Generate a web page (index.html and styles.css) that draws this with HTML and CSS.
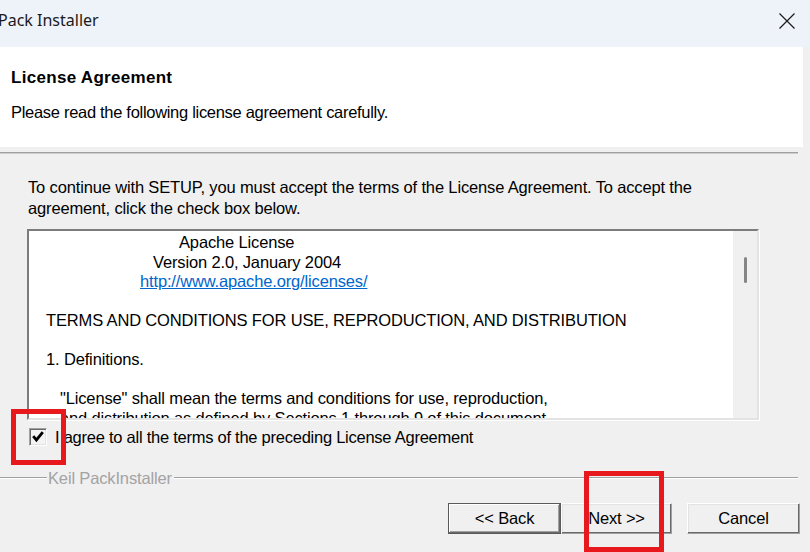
FILE: index.html
```html
<!DOCTYPE html>
<html>
<head>
<meta charset="utf-8">
<link rel="stylesheet" href="styles.css">
</head>
<body>
<div class="window">
  <div class="titlebar">
    <span class="title">Pack Installer</span>
    <svg class="close" width="16" height="16" viewBox="0 0 16 16"><path d="M0.5 0.5 L15.5 15.5 M15.5 0.5 L0.5 15.5" stroke="#1b1b1b" stroke-width="1.2" fill="none"/></svg>
  </div>
  <div class="header">
    <div class="h-title">License Agreement</div>
    <div class="h-sub">Please read the following license agreement carefully.</div>
  </div>
  <div class="sep"></div>
  <div class="content">
    <p class="intro">To continue with SETUP, you must accept the terms of the License Agreement. To accept the<br>agreement, click the check box below.</p>
    <div class="listbox">
      <div class="lic-text">
        <div class="line ind-a">Apache License</div>
        <div class="line ind-b">Version 2.0, January 2004</div>
        <div class="line ind-c"><a class="link" href="#">http://www.apache.org/licenses/</a></div>
        <div class="line">&nbsp;</div>
        <div class="line">TERMS AND CONDITIONS FOR USE, REPRODUCTION, AND DISTRIBUTION</div>
        <div class="line">&nbsp;</div>
        <div class="line">1. Definitions.</div>
        <div class="line">&nbsp;</div>
        <div class="line ind-d">"License" shall mean the terms and conditions for use, reproduction,</div>
        <div class="line ind-d">and distribution as defined by Sections 1 through 9 of this document.</div>
      </div>
      <div class="scrollbar"><div class="thumb"></div></div>
    </div>
    <div class="agree">
      <span class="cb"><svg width="14" height="14" viewBox="0 0 14 14"><path d="M2.2 6.2 L5.4 10 L11.8 2.2" stroke="#000" stroke-width="2.8" fill="none"/></svg></span>
      <span class="agree-label">I agree to all the terms of the preceding License Agreement</span>
    </div>
  </div>
  <div class="group">
    <span class="gline gline-short"></span>
    <span class="glabel">Keil PackInstaller</span>
    <span class="gline"></span>
  </div>
  <div class="buttons">
    <button class="btn btn-back">&lt;&lt; Back</button>
    <button class="btn btn-next">Next &gt;&gt;</button>
    <button class="btn btn-cancel">Cancel</button>
  </div>
</div>
<div class="mark mark-check"></div>
<div class="mark mark-next"></div>
</body>
</html>
```
FILE: styles.css
```css
html, body {
  margin: 0;
  padding: 0;
}
body {
  width: 810px;
  height: 552px;
  overflow: hidden;
  background: #f0f0f0;
  font-family: "Liberation Sans", Arial, sans-serif;
  font-size: 16.5px;
  letter-spacing: -0.15px;
  color: #000;
}
.window {
  width: 803px;
  display: flex;
  flex-direction: column;
}
.titlebar {
  height: 47px;
  background: #eef2f9;
  display: flex;
  align-items: center;
  justify-content: space-between;
  padding-right: 15px;
  width: 810px;
  box-sizing: border-box;
}
.title {
  font-family: "Noto Sans", "Open Sans", sans-serif;
  font-size: 16px;
  letter-spacing: 0;
  margin-left: -2px;
  margin-top: -8px;
  color: #1a1a1a;
}
.close {
  margin-top: -6px;
}
.header {
  height: 100px;
  background: #fff;
  padding-left: 11px;
  box-sizing: border-box;
}
.h-title {
  font-weight: bold;
  font-size: 17px;
  letter-spacing: 0.3px;
  margin-top: 21px;
  line-height: 20px;
}
.h-sub {
  margin-top: 14px;
  line-height: 20px;
  letter-spacing: -0.3px;
}
.sep {
  height: 2px;
  margin-top: 5px;
  border-top: 1px solid #a0a0a0;
  border-bottom: 1px solid #cdcdcd;
  box-sizing: border-box;
  width: 798px;
}
.content {
  padding-left: 27px;
  display: flex;
  flex-direction: column;
}
.intro {
  margin: 23px 0 0 1px;
  line-height: 21px;
}
.listbox {
  margin-top: 10px;
  width: 732px;
  height: 191px;
  box-sizing: border-box;
  border: 2px solid;
  border-color: #7c7c7c #e3e3e3 #e3e3e3 #7c7c7c;
  box-shadow: 1px 1px 0 #fff;
  background: #fff;
  display: flex;
  overflow: hidden;
}
.lic-text {
  flex: 1;
  padding: 2px 0 0 17px;
  overflow: hidden;
}
.line {
  line-height: 19.5px;
  white-space: nowrap;
}
.ind-a { padding-left: 133px; }
.ind-b { padding-left: 107px; }
.ind-c { padding-left: 94px; }
.ind-d { padding-left: 14px; }
.link {
  color: #0066cc;
  text-decoration: underline;
}
.scrollbar {
  width: 24px;
  background: #f0f0f0;
  position: relative;
}
.thumb {
  position: absolute;
  left: 11px;
  top: 26px;
  width: 3px;
  height: 26px;
  border-radius: 2px;
  background: #858585;
}
.agree {
  display: flex;
  align-items: center;
  margin-top: 8px;
  height: 18px;
}
.cb {
  width: 18px;
  height: 18px;
  box-sizing: border-box;
  margin-left: 2px;
  border: 1px solid;
  border-color: #a0a0a0 #fff #fff #a0a0a0;
  box-shadow: inset 1px 1px 0 #696969, inset -1px -1px 0 #e3e3e3;
  background: #f4f4f4;
  display: flex;
  align-items: center;
  justify-content: center;
}
.agree-label {
  margin-left: 8px;
  letter-spacing: -0.25px;
}
.group {
  display: flex;
  align-items: center;
  margin-top: 23px;
  width: 798px;
}
.gline {
  flex: 1;
  height: 2px;
  border-top: 1px solid #a0a0a0;
  border-bottom: 1px solid #fff;
  box-sizing: border-box;
}
.gline-short {
  flex: 0 0 47px;
}
.glabel {
  color: #a3a3a3;
  padding: 0 2px 0 1px;
  line-height: 18px;
}
.buttons {
  display: flex;
  justify-content: flex-end;
  margin-top: 16px;
  width: 800px;
}
.btn {
  height: 31px;
  font-family: "Liberation Sans", Arial, sans-serif;
  font-size: 16.5px;
  letter-spacing: -0.15px;
  color: #000;
  background: #f0f0f0;
  border: 1px solid;
  border-color: #fff #a0a0a0 #a0a0a0 #fff;
  box-shadow: inset -1px -1px 0 #696969, inset 1px 1px 0 #e3e3e3;
  padding: 0;
  margin: 0;
  box-sizing: border-box;
  flex: none;
}
.btn-back {
  width: 113px;
  border: 1px solid #5a5a5a;
  box-shadow: inset -1px -1px 0 #696969, inset 1px 1px 0 #fff, inset -2px -2px 0 #a0a0a0;
}
.btn-next {
  width: 111px;
}
.btn-cancel {
  width: 113px;
  margin-left: 15px;
}
.mark {
  position: absolute;
  border: 5px solid #e8191d;
  box-sizing: border-box;
}
.mark-check {
  left: 11px;
  top: 409px;
  width: 55px;
  height: 56px;
}
.mark-next {
  left: 584px;
  top: 471px;
  width: 80px;
  height: 81px;
}
```
